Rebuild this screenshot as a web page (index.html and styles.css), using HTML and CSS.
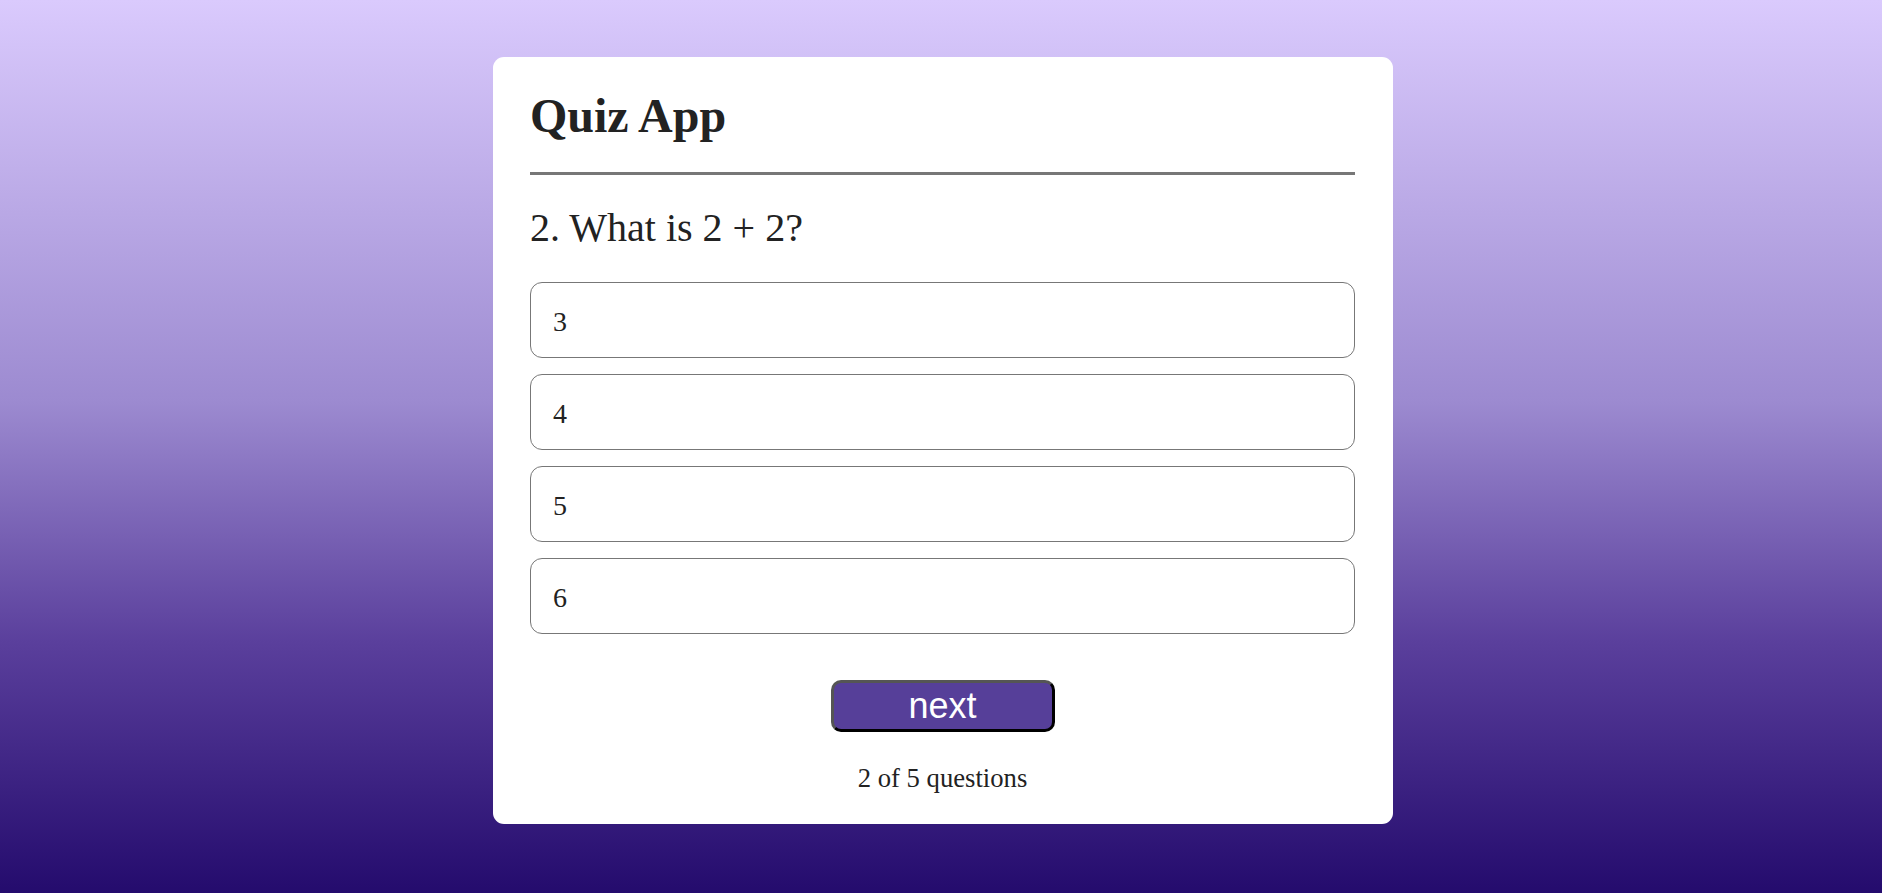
FILE: index.html
```html
<!DOCTYPE html>
<html lang="en">
<head>
<meta charset="utf-8">
<title>Quiz App</title>
<link rel="stylesheet" href="styles.css">
</head>
<body>
<div class="page">
  <div class="card">
    <h1 class="title">Quiz App</h1>
    <div class="rule"></div>
    <h2 class="question">2. What is 2 + 2?</h2>
    <ul class="options">
      <li class="option">3</li>
      <li class="option">4</li>
      <li class="option">5</li>
      <li class="option">6</li>
    </ul>
    <div class="actions">
      <button class="next-btn">next</button>
    </div>
    <p class="progress">2 of 5 questions</p>
  </div>
</div>
</body>
</html>
```

FILE: styles.css
```css
html, body {
  margin: 0;
  padding: 0;
  height: 100%;
}
body {
  background: linear-gradient(to bottom, #dacafd 0%, #9c8ad0 45%, #5a3f9c 72%, #240b6d 100%);
  font-family: "Liberation Serif", "Times New Roman", serif;
  color: #222;
}
.page {
  display: flex;
  justify-content: center;
  padding: 57px 0 0 4px;
}
.card {
  width: 900px;
  box-sizing: border-box;
  background: #fff;
  border-radius: 11px;
  padding: 31px 38px 30px 37px;
}
.title {
  margin: 0;
  font-size: 48px;
  line-height: 55px;
  font-weight: bold;
}
.rule {
  margin-top: 29px;
  height: 3px;
  background: #777;
}
.question {
  margin: 30px 0 0;
  font-size: 40px;
  line-height: 46px;
  font-weight: normal;
}
.options {
  list-style: none;
  margin: 31px 0 0;
  padding: 0;
  display: flex;
  flex-direction: column;
  gap: 16px;
}
.option {
  height: 76px;
  box-sizing: border-box;
  border: 1px solid #777;
  border-radius: 12px;
  padding: 3px 22px 0;
  display: flex;
  align-items: center;
  font-size: 28px;
}
.actions {
  margin-top: 46px;
  display: flex;
  justify-content: center;
}
.next-btn {
  width: 224px;
  height: 52px;
  box-sizing: border-box;
  background: #563f99;
  color: #fff;
  font-family: "Liberation Sans", Arial, sans-serif;
  font-size: 36px;
  line-height: 1;
  padding: 0;
  border-style: solid;
  border-width: 3px;
  border-color: #555 #000 #000 #555;
  border-radius: 10px;
}
.progress {
  margin: 31px 0 0;
  text-align: center;
  font-size: 26.67px;
  line-height: 31px;
}
```
